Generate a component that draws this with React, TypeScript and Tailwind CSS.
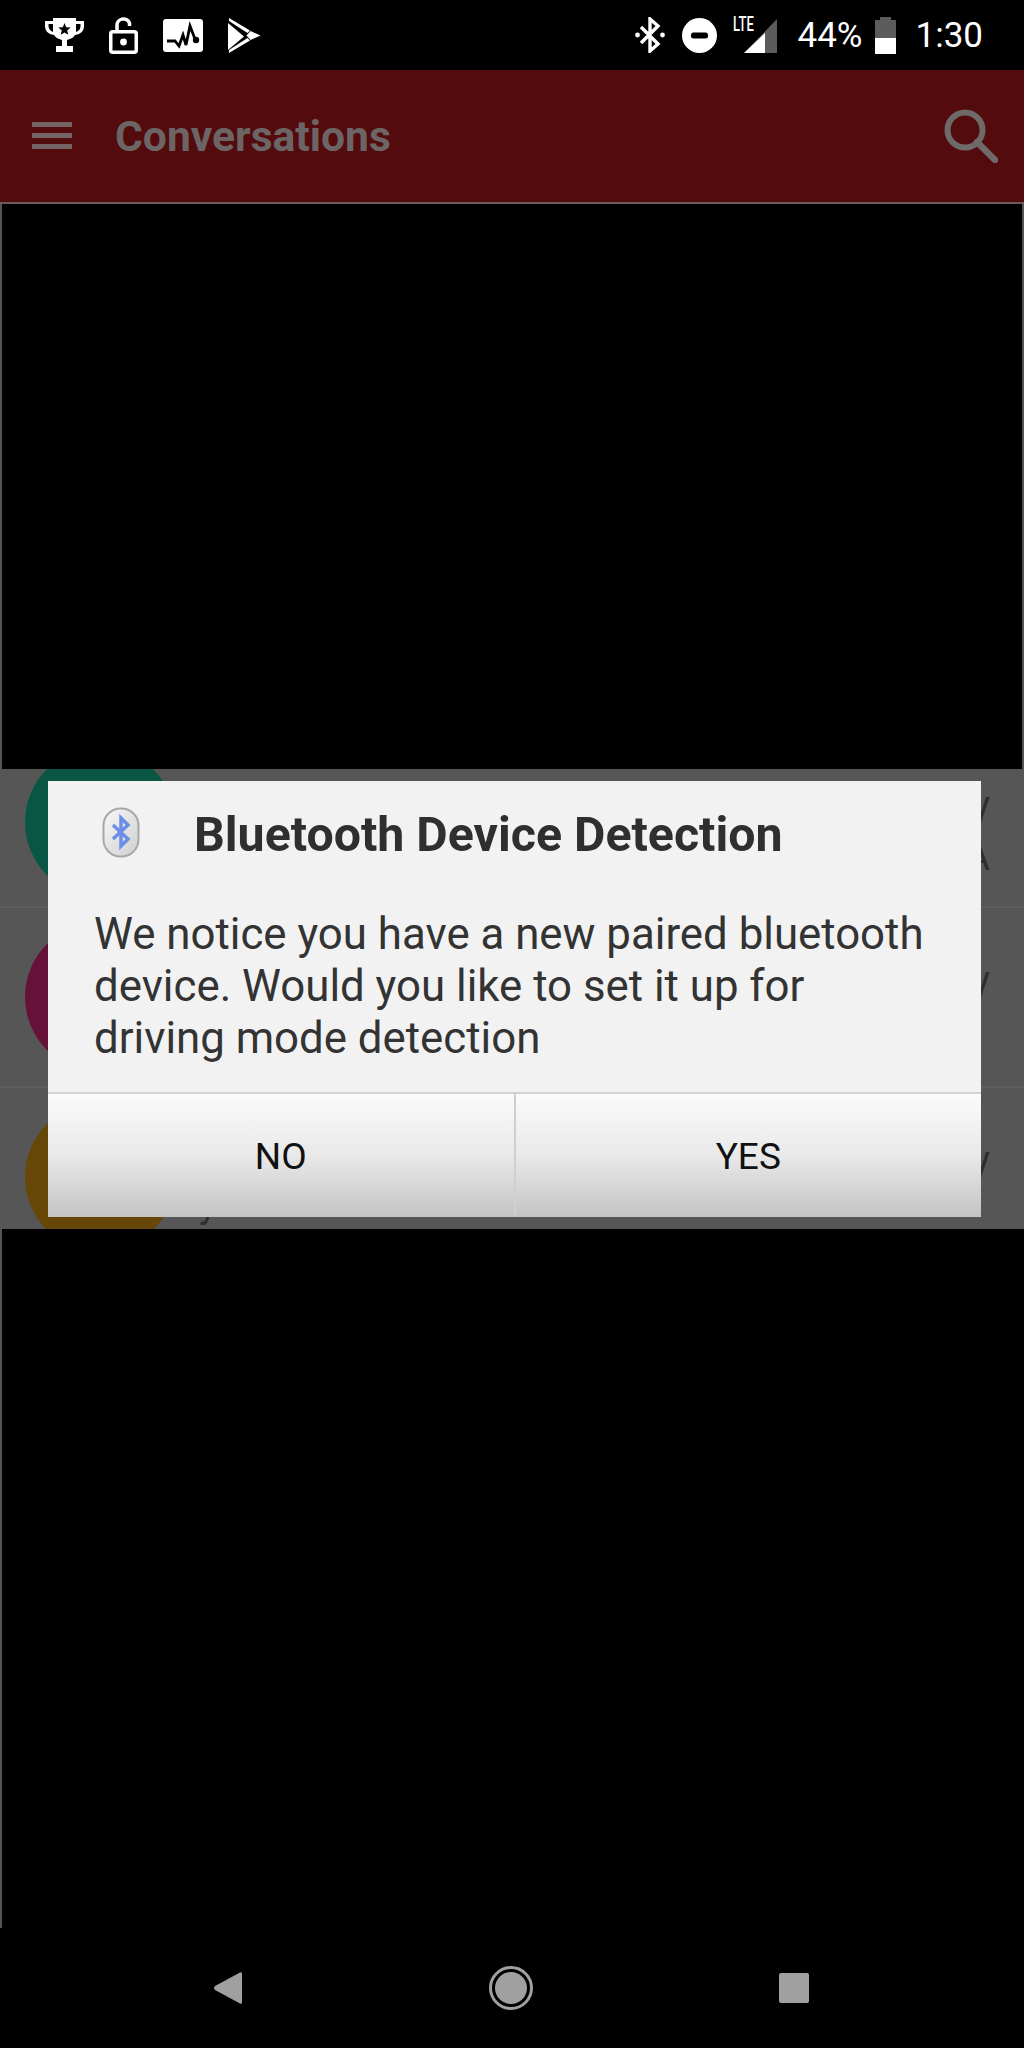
import type React from "react"

const TrophyIcon = () => (
  <svg width="39" height="34" viewBox="0 0 39 34" fill="white">
    <path d="M8 0h23v3h8v5c0 5-3 8-9 9-1 2-4 4-8 5v6h6v6H11v-6h6v-6c-4-1-7-3-8-5C3 16 0 13 0 8V3h8V0zM3.500 6v2c0 3 2 5 4.500 6V6H3.500zM31 6v8c3-1 4.500-3 4.500-6V6H31z" fillRule="evenodd" />
    <path d="M19.500 5l1.700 4.200 4.500.3-3.500 2.900 1.100 4.400-3.800-2.400-3.800 2.400 1.100-4.400-3.500-2.900 4.500-.3z" fill="black" />
  </svg>
)

const LockOpenIcon = () => (
  <svg width="29" height="37" viewBox="0 0 29 37" fill="none" stroke="white" strokeWidth="3.500">
    <path d="M8 14V9a6.500 6.500 0 0 1 12.500-3v3" />
    <rect x="1.750" y="14.750" width="25.500" height="20.500" rx="2" />
    <circle cx="14.500" cy="25" r="3.400" fill="white" stroke="none" />
  </svg>
)

const PulseCardIcon = () => (
  <svg width="40" height="33" viewBox="0 0 40 33">
    <rect width="40" height="33" rx="3" fill="white" />
    <path d="M4 22h8l4 5 4-11 3 10 4-19 5 13" fill="none" stroke="black" strokeWidth="2.800" />
    <circle cx="33" cy="21" r="3.200" fill="black" />
  </svg>
)

const PlayStoreIcon = () => (
  <svg width="33" height="35" viewBox="0 0 33 35" fill="white">
    <path d="M0 5v27l16-13.500z" />
    <path d="M1 0l21 12.500-2.500 2.500L1 3z" />
    <path d="M1 35l21-12.500-2.500-2.500L1 32z" />
    <path d="M22.500 13L32.500 17.500 22.500 22 18.500 17.500z" />
  </svg>
)

const BluetoothStatusIcon = () => (
  <svg width="30" height="36" viewBox="0 0 30 36" fill="none" stroke="white" strokeWidth="3.400">
    <path d="M6 10l17 17-8 7V2l8 7L6 26" />
    <circle cx="2.500" cy="18" r="2.400" fill="white" stroke="none" />
    <circle cx="27.500" cy="18" r="2.400" fill="white" stroke="none" />
  </svg>
)

const DndIcon = () => (
  <svg width="35" height="35" viewBox="0 0 35 35">
    <circle cx="17.500" cy="17.500" r="17.500" fill="white" />
    <rect x="9" y="14.500" width="17" height="6" rx="2.500" fill="black" />
  </svg>
)

const SignalIcon = () => (
  <svg width="33" height="34" viewBox="0 0 33 34">
    <path d="M33 0v34H0z" fill="#5c5c5c" />
    <path d="M21 14v20H0z" fill="white" />
  </svg>
)

const BatteryIcon = () => (
  <svg width="21" height="37" viewBox="0 0 21 37">
    <path d="M5 0h11v3h5v19H0V3h5z" fill="#5c5c5c" />
    <path d="M0 21h21v16H0z" fill="white" />
  </svg>
)

const MenuIcon = () => (
  <div className="flex w-10 flex-col gap-[6px]">
    <div className="h-[5px] bg-[#736363]" />
    <div className="h-[5px] bg-[#736363]" />
    <div className="h-[5px] bg-[#736363]" />
  </div>
)

const SearchIcon = () => (
  <svg width="54" height="54" viewBox="0 0 54 54" fill="none" stroke="#6e6a6a">
    <circle cx="21" cy="21" r="17.500" strokeWidth="6" />
    <path d="M33 33l18 18" strokeWidth="6.500" strokeLinecap="round" />
  </svg>
)

const BluetoothBadge = () => (
  <svg width="38" height="52" viewBox="0 0 38 52">
    <defs>
      <linearGradient id="badge" x1="0" y1="0" x2="1" y2="1">
        <stop offset="0" stopColor="#f8f8f8" />
        <stop offset="1" stopColor="#cfcfcf" />
      </linearGradient>
    </defs>
    <rect x="1.500" y="1.500" width="35" height="48" rx="17" fill="url(#badge)" stroke="#a8a8a8" strokeWidth="2" />
    <path d="M11 18l15 14-7 7V11l7 7-15 14" fill="none" stroke="#6b8ee8" strokeWidth="3.500" />
  </svg>
)

const BackIcon = () => (
  <svg width="30" height="34" viewBox="0 0 30 34">
    <path d="M27 1.500Q29 .500 29 3v28q0 2.500-2 1.500L2 19q-2-2 0-4z" fill="#a0a0a0" />
  </svg>
)

const HomeIcon = () => (
  <svg width="46" height="46" viewBox="0 0 46 46">
    <circle cx="23" cy="23" r="20.500" fill="none" stroke="#a0a0a0" strokeWidth="3" />
    <circle cx="23" cy="23" r="16" fill="#a0a0a0" />
  </svg>
)

interface RowProps {
  color: string
  height: string
  leftGlyph?: string
  rightGlyph?: string
}

const ConversationRow: React.FC<RowProps> = ({ color, height, leftGlyph, rightGlyph }) => (
  <div className={`flex shrink-0 items-center border-b-2 border-[#5e5e5e] pl-[25px] pr-[34px] ${height}`}>
    <div className={`h-[150px] w-[150px] shrink-0 rounded-full ${color}`} />
    <div className="ml-6 flex flex-1 flex-col pt-[18px] text-[38px] leading-[52px] text-[#2e2e2e]">
      <div className="text-right">y</div>
      <div className="flex min-h-[52px] justify-between">
        <span className="self-start leading-[36px]">{leftGlyph}</span>
        <span>{rightGlyph}</span>
      </div>
    </div>
  </div>
)

const App: React.FC = () => {
  return (
    <div className="flex h-[2048px] w-[1024px] flex-col overflow-hidden bg-black font-['Roboto',sans-serif]">
      <div className="flex h-[70px] shrink-0 items-center justify-between pl-[45px] pr-[41px]">
        <div className="flex items-center gap-[25px]">
          <TrophyIcon />
          <LockOpenIcon />
          <PulseCardIcon />
          <PlayStoreIcon />
        </div>
        <div className="flex items-center text-[35px] text-white">
          <BluetoothStatusIcon />
          <div className="mr-4 ml-[17px]">
            <DndIcon />
          </div>
          <div className="relative mt-[2px] h-[36px] w-[44px]">
            <div className="absolute top-[1px] left-[11px]">
              <SignalIcon />
            </div>
            <span className="absolute -top-[6px] left-0 origin-left scale-x-[0.62] text-[21px] leading-[24px] font-medium">LTE</span>
          </div>
          <span className="ml-[21px] leading-none">44%</span>
          <div className="mr-5 ml-3">
            <BatteryIcon />
          </div>
          <span className="leading-none">1:30</span>
        </div>
      </div>

      <div className="flex h-[134px] shrink-0 items-center justify-between border-b-2 border-[#6b5a5a] bg-[#530b0e] pl-8 pr-[26px]">
        <div className="flex items-center gap-[43px]">
          <MenuIcon />
          <span className="mt-[2px] text-[42.6px] font-bold text-[#6d6565]">Conversations</span>
        </div>
        <SearchIcon />
      </div>

      <div className="h-[565px] shrink-0 border-x-2 border-[#555555]" />

      <div className="relative h-[460px] shrink-0 bg-[#565656]">
        <div className="h-full overflow-hidden">
          <div className="-mt-[31px] flex flex-col">
            <ConversationRow color="bg-[#0a5644]" height="h-[170px]" rightGlyph="A" />
            <ConversationRow color="bg-[#661238]" height="h-[180px]" />
            <ConversationRow color="bg-[#664708]" height="h-[180px]" leftGlyph="y" />
          </div>
        </div>

        <div className="absolute top-3 left-12 flex h-[436px] w-[933px] flex-col bg-[#f2f2f2]">
          <div className="flex h-[104px] shrink-0 items-center pl-[54px]">
            <BluetoothBadge />
            <h2 className="mt-[4px] ml-[54px] text-[48.3px] font-bold text-[#2f2f2f]">Bluetooth Device Detection</h2>
          </div>
          <p className="ml-[46px] w-[845px] pt-[23px] text-[43.8px] leading-[52px] text-[#333333]">
            We notice you have a new paired bluetooth device. Would you like to set it up for driving mode detection
          </p>
          <div className="mt-auto flex h-[125px] border-t-2 border-[#d2d2d2] text-[37px] text-[#111111]">
            <button className="flex-1 bg-gradient-to-b from-[#fbfbfb] via-[#e9e9e9] to-[#c4c4c4] pt-[2px]">NO</button>
            <div className="w-[2px] bg-[#cfcfcf]" />
            <button className="flex-1 bg-gradient-to-b from-[#fbfbfb] via-[#e9e9e9] to-[#c4c4c4] pt-[2px]">YES</button>
          </div>
        </div>
      </div>

      <div className="h-[699px] shrink-0 border-l-2 border-[#555555]" />

      <div className="flex flex-1 items-center pr-[3px] pl-[86px]">
        <div className="flex w-[283px] justify-center">
          <BackIcon />
        </div>
        <div className="flex w-[283px] justify-center">
          <HomeIcon />
        </div>
        <div className="flex w-[283px] justify-center">
          <div className="h-[30px] w-[30px] rounded-[2px] bg-[#a0a0a0]" />
        </div>
      </div>
    </div>
  )
}

export default App
